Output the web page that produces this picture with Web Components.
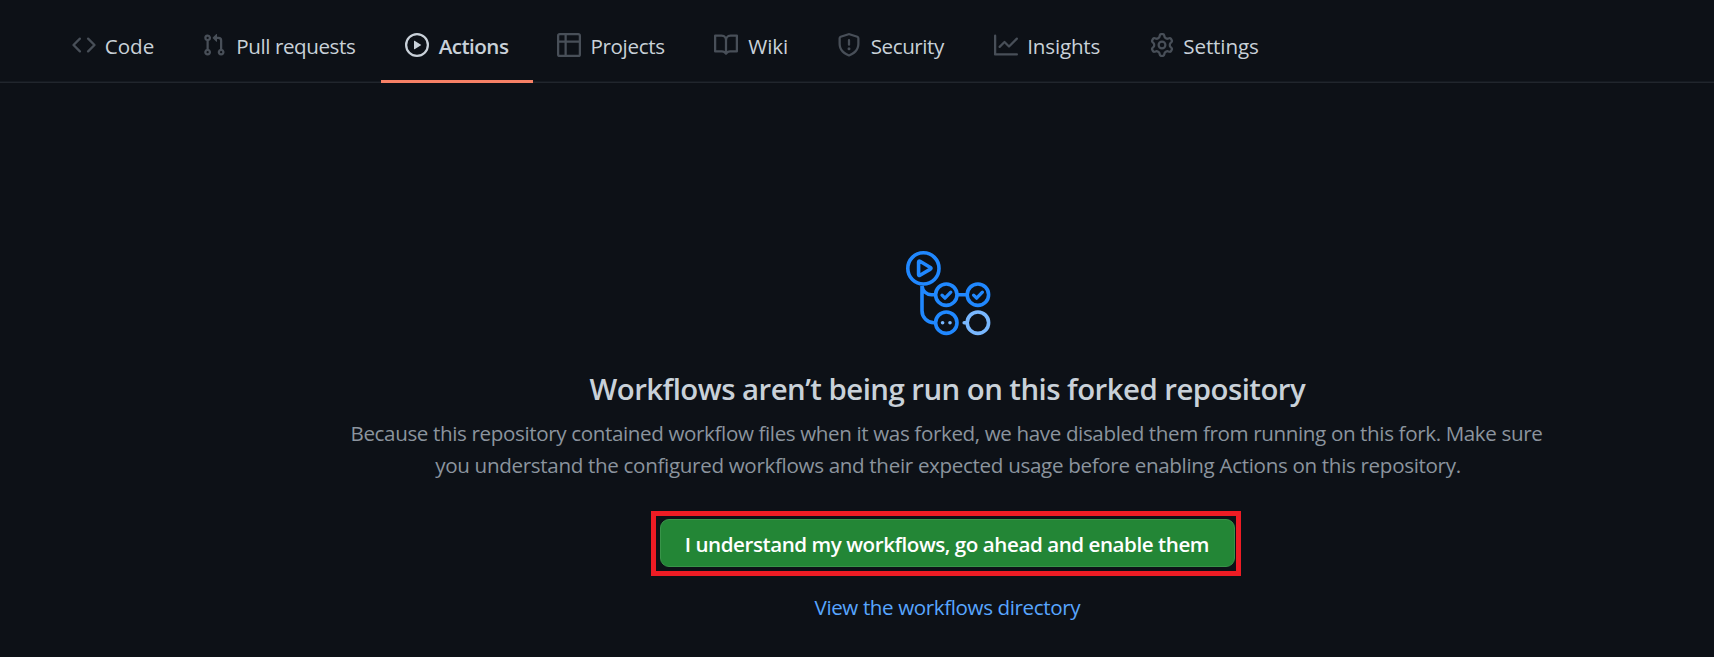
<!DOCTYPE html>
<html lang="en">
<head>
<meta charset="utf-8">
<title>Actions</title>
<style>
html,body{margin:0;height:100%;background:#0d1117;overflow:hidden}
body{font-family:"Open Sans","Noto Sans",sans-serif;color:#c9d1d9}
</style>
</head>
<body>
<repo-page>
  <repo-nav slot="nav">
    <nav-tab style="width:130px;--gap:9.7px" icon="code"><ink-line width="48">Code</ink-line></nav-tab>
    <nav-tab style="width:203px;--gap:12.3px" icon="pull"><ink-line width="116.7">Pull requests</ink-line></nav-tab>
    <nav-tab style="width:152px;--gap:9.7px" icon="play" selected><ink-line width="70.3" weight="600">Actions</ink-line></nav-tab>
    <nav-tab style="width:157px;--gap:11.5px" icon="table"><ink-line width="71.7">Projects</ink-line></nav-tab>
    <nav-tab style="width:123px;--gap:10.3px" icon="book"><ink-line width="38.7">Wiki</ink-line></nav-tab>
    <nav-tab style="width:157px;--gap:10.7px" icon="shield"><ink-line width="73.4">Security</ink-line></nav-tab>
    <nav-tab style="width:156px;--gap:11.3px" icon="graph"><ink-line width="70.3">Insights</ink-line></nav-tab>
    <nav-tab style="width:157px;--gap:10.3px" icon="gear"><ink-line width="73.7">Settings</ink-line></nav-tab>
  </repo-nav>
  <blank-slate>
    <flow-art slot="art"></flow-art>
    <ink-line slot="title" width="717" size="29.4" weight="600">Workflows aren’t being run on this forked repository</ink-line>
    <ink-line slot="text" width="1191">Because this repository contained workflow files when it was forked, we have disabled them from running on this fork. Make sure</ink-line>
    <ink-line slot="text" width="1025.5">you understand the configured workflows and their expected usage before enabling Actions on this repository.</ink-line>
    <green-button slot="action"><ink-line width="523.6" weight="600">I understand my workflows, go ahead and enable them</ink-line></green-button>
    <text-link slot="link"><ink-line width="267">View the workflows directory</ink-line></text-link>
  </blank-slate>
</repo-page>
<script>
const FAMILY = '"Open Sans","Noto Sans",sans-serif';
const pen = document.createElement('canvas').getContext('2d');
const define = (name, html, setup) => customElements.define(name, class extends HTMLElement {
  connectedCallback() {
    if (this.shadowRoot) return;
    this.attachShadow({mode: 'open'}).innerHTML = html;
    if (setup) setup(this, this.shadowRoot);
  }
});

const ICONS = {
  code: 'M4.72 3.22a.75.75 0 011.06 1.06L2.06 8l3.72 3.72a.75.75 0 11-1.06 1.06L.47 8.53a.75.75 0 010-1.06l4.25-4.25zm6.56 0a.75.75 0 10-1.06 1.06L13.94 8l-3.72 3.72a.75.75 0 101.06 1.06l4.25-4.25a.75.75 0 000-1.06l-4.25-4.25z',
  pull: 'M7.177 3.073L9.573.677A.25.25 0 0110 .854v4.792a.25.25 0 01-.427.177L7.177 3.427a.25.25 0 010-.354zM3.75 2.5a.75.75 0 100 1.5.75.75 0 000-1.5zm-2.25.75a2.25 2.25 0 113 2.122v5.256a2.251 2.251 0 11-1.5 0V5.372A2.25 2.25 0 011.5 3.25zM11 2.5h-1V4h1a1 1 0 011 1v5.628a2.251 2.251 0 101.5 0V5A2.5 2.5 0 0011 2.5zm1 10.25a.75.75 0 111.5 0 .75.75 0 01-1.5 0zM3.75 12a.75.75 0 100 1.5.75.75 0 000-1.5z',
  play: 'M1.5 8a6.5 6.5 0 1113 0 6.5 6.5 0 01-13 0zM8 0a8 8 0 100 16A8 8 0 008 0zM6.379 5.227A.25.25 0 006 5.442v5.117a.25.25 0 00.379.214l4.264-2.559a.25.25 0 000-.428L6.379 5.227z',
  table: 'M0 1.75C0 .784.784 0 1.75 0h12.5C15.216 0 16 .784 16 1.75v12.5A1.75 1.75 0 0114.25 16H1.75A1.75 1.75 0 010 14.25V1.75zM1.5 6.5v7.75c0 .138.112.25.25.25H5v-8H1.5zM5 5H1.5V1.75a.25.25 0 01.25-.25H5V5zm1.5 1.5v8h7.75a.25.25 0 00.25-.25V6.5h-8zm8-1.5h-8V1.5h7.75a.25.25 0 01.25.25V5z',
  book: 'M0 1.75A.75.75 0 01.75 1h4.253c1.227 0 2.317.59 3 1.501A3.744 3.744 0 0111.006 1h4.245a.75.75 0 01.75.75v10.5a.75.75 0 01-.75.75h-4.507a2.25 2.25 0 00-1.591.659l-.622.621a.75.75 0 01-1.06 0l-.622-.621A2.25 2.25 0 005.258 13H.75a.75.75 0 01-.75-.75V1.75zm8.755 3a2.25 2.25 0 012.25-2.25H14.5v9h-3.757c-.71 0-1.4.201-1.992.572l.004-7.322zm-1.504 7.324l.004-5.073-.002-2.253A2.25 2.25 0 005.003 2.5H1.5v9h3.757a3.75 3.75 0 011.994.574z',
  shield: 'M7.467.133a1.75 1.75 0 011.066 0l5.25 1.68A1.75 1.75 0 0115 3.48V7c0 1.566-.32 3.182-1.303 4.682-.983 1.498-2.585 2.813-5.032 3.855a1.7 1.7 0 01-1.33 0c-2.447-1.042-4.049-2.357-5.032-3.855C1.32 10.182 1 8.566 1 7V3.48a1.75 1.75 0 011.217-1.667l5.25-1.68zm.61 1.429a.25.25 0 00-.153 0l-5.25 1.68a.25.25 0 00-.174.238V7c0 1.358.275 2.666 1.057 3.86.784 1.194 2.121 2.34 4.366 3.297a.2.2 0 00.154 0c2.245-.956 3.582-2.104 4.366-3.298C13.225 9.666 13.5 8.36 13.5 7V3.48a.25.25 0 00-.174-.237l-5.25-1.68zM9 10.5a1 1 0 11-2 0 1 1 0 012 0zm-.25-5.75a.75.75 0 10-1.5 0v3a.75.75 0 001.5 0v-3z',
  graph: 'M1.5 1.75a.75.75 0 00-1.5 0v12.5c0 .414.336.75.75.75h14.5a.75.75 0 000-1.5H1.5V1.75zm14.28 2.53a.75.75 0 00-1.06-1.06L10 7.94 7.53 5.47a.75.75 0 00-1.06 0L3.22 8.72a.75.75 0 001.06 1.06L7 7.06l2.47 2.47a.75.75 0 001.06 0l5.25-5.25z',
  gear: 'M7.429 1.525a6.593 6.593 0 011.142 0c.036.003.108.036.137.146l.289 1.105c.147.56.55.967.997 1.189.174.086.341.183.501.29.417.278.97.423 1.53.27l1.102-.303c.11-.03.175.016.195.046.219.31.41.641.573.989.014.031.022.11-.059.19l-.815.806c-.411.406-.562.957-.53 1.456a4.588 4.588 0 010 .582c-.032.499.119 1.05.53 1.456l.815.806c.08.08.073.159.059.19a6.494 6.494 0 01-.573.99c-.02.029-.086.074-.195.045l-1.103-.303c-.559-.153-1.112-.008-1.529.27-.16.107-.327.204-.5.29-.449.222-.851.628-.998 1.189l-.289 1.105c-.029.11-.101.143-.137.146a6.613 6.613 0 01-1.142 0c-.036-.003-.108-.037-.137-.146l-.289-1.105c-.147-.56-.55-.967-.997-1.189a4.502 4.502 0 01-.501-.29c-.417-.278-.97-.423-1.53-.27l-1.102.303c-.11.03-.175-.016-.195-.046a6.492 6.492 0 01-.573-.989c-.014-.031-.022-.11.059-.19l.815-.806c.411-.406.562-.957.53-1.456a4.587 4.587 0 010-.582c.032-.499-.119-1.05-.53-1.456l-.815-.806c-.08-.08-.073-.159-.059-.19a6.44 6.44 0 01.573-.99c.02-.029.086-.075.195-.045l1.103.303c.559.153 1.112.008 1.529-.27.16-.107.327-.204.5-.29.449-.222.851-.628.998-1.189l.289-1.105c.029-.11.101-.143.137-.146zM8 0c-.236 0-.47.01-.701.03-.743.065-1.29.615-1.458 1.261l-.29 1.106c-.017.066-.078.158-.211.224a5.994 5.994 0 00-.668.386c-.123.082-.233.09-.3.071L3.27 2.776c-.644-.177-1.392.02-1.82.63a7.977 7.977 0 00-.704 1.217c-.315.675-.111 1.422.363 1.891l.815.806c.05.048.098.147.088.294a6.084 6.084 0 000 .772c.01.147-.038.246-.088.294l-.815.806c-.474.469-.678 1.216-.363 1.891.2.428.436.835.704 1.218.428.609 1.176.806 1.82.63l1.103-.303c.066-.019.176-.011.299.071.213.143.436.272.668.386.133.066.194.158.212.224l.289 1.106c.169.646.715 1.196 1.458 1.26a8.094 8.094 0 001.402 0c.743-.064 1.29-.614 1.458-1.26l.29-1.106c.017-.066.078-.158.211-.224a5.98 5.98 0 00.668-.386c.123-.082.233-.09.3-.071l1.102.302c.644.177 1.392-.02 1.82-.63.268-.382.505-.789.704-1.217.315-.675.111-1.422-.364-1.891l-.814-.806c-.05-.048-.098-.147-.088-.294a6.1 6.1 0 000-.772c-.01-.147.039-.246.088-.294l.814-.806c.475-.469.679-1.216.364-1.891a7.992 7.992 0 00-.704-1.218c-.428-.609-1.176-.806-1.82-.63l-1.103.303c-.066.019-.176.011-.299-.071a5.991 5.991 0 00-.668-.386c-.133-.066-.194-.158-.212-.224L10.16 1.29C9.99.645 9.444.095 8.701.031A8.094 8.094 0 008 0zm1.5 8a1.5 1.5 0 11-3 0 1.5 1.5 0 013 0zM11 8a3 3 0 11-6 0 3 3 0 016 0z'
};

/* A single line of text, tracked so that its ink fills the given width. */
define('ink-line', `<style>
:host{display:block;white-space:nowrap;flex:none}
span{display:block;width:max-content;font-variant-ligatures:none}
</style><span><slot></slot></span>`, (el, root) => {
  const size = +(el.getAttribute('size') || 20.6), weight = el.getAttribute('weight') || 400;
  const width = +el.getAttribute('width'), text = el.textContent;
  pen.font = `${weight} ${size}px ${FAMILY}`;
  pen.letterSpacing = '0.01px';
  const m = pen.measureText(text);
  const ink = m.actualBoundingBoxLeft + m.actualBoundingBoxRight;
  const span = root.querySelector('span');
  el.style.width = width + 'px';
  span.style.cssText = `font-size:${size}px;font-weight:${weight};letter-spacing:${((width - ink) / (text.length - 1)).toFixed(3)}px;margin-left:${m.actualBoundingBoxLeft.toFixed(2)}px`;
});

define('repo-page', `<style>
:host{display:flex;flex-direction:column;height:657px;background:#0d1117}
</style><slot name="nav"></slot><slot></slot>`);

define('repo-nav', `<style>
:host{display:flex;box-sizing:border-box;height:83px;padding-left:48px;box-shadow:inset 0 -1px #21262d,inset 0 -2px #151a21}
</style><slot></slot>`);

define('nav-tab', `<style>
:host{display:flex;align-items:center;box-sizing:border-box;height:83px;padding:9px 0 0 24px;line-height:28px;flex:none;color:#c9d1d9}
:host([selected]){border-bottom:3px solid #f78166;padding-top:12px}
svg{width:24px;height:24px;margin:-2px var(--gap) 0 0;fill:#484f58;flex:none}
:host([selected]) svg{fill:#c9d1d9}
</style><svg viewBox="0 0 16 16"><path fill-rule="evenodd"/></svg><slot></slot>`, (el, root) => {
  root.querySelector('path').setAttribute('d', ICONS[el.getAttribute('icon')]);
});

define('blank-slate', `<style>
:host{display:flex;flex-direction:column;align-items:center;width:1200px;margin-left:348px;padding-top:164px}
.title{line-height:40px;margin-top:26px;color:#c9d1d9}
.text{display:flex;flex-direction:column;align-items:center;line-height:32px;margin-top:8px;color:#8b949e}
.action{margin:30px 4px 0 0}
.link{margin-top:15px;line-height:32px}
</style>
<slot name="art"></slot>
<div class="title"><slot name="title"></slot></div>
<div class="text"><slot name="text"></slot></div>
<div class="action"><slot name="action"></slot></div>
<div class="link"><slot name="link"></slot></div>`);

define('flow-art', `<style>
:host{display:block;width:96px;height:96px}
svg{display:block}
</style>
<svg width="96" height="96" viewBox="900 247 96 96" fill="none" stroke="#2088ff" stroke-width="3.6" stroke-linecap="round" stroke-linejoin="round">
<circle cx="923.4" cy="268.4" r="15.6"/>
<path d="M918.6 262.300v12.200q0 1.600 1.400.8l10.400-6.200q1.200-.8 0-1.600l-10.400-6.200q-1.400-.7-1.400 1z"/>
<path d="M922 286v24.700a12 12 0 0012 12M922 286a9.500 9.500 0 009.500 8.700h3M958 294.700h8" stroke-linecap="butt"/>
<circle cx="946.300" cy="294.700" r="10.700"/><circle cx="977.900" cy="294.700" r="10.700"/><circle cx="946.300" cy="322.700" r="10.700"/>
<path d="M942 295.200l3 3 5.800-6M973.600 295.200l3 3 5.800-6" stroke-width="3.300"/>
<g fill="#79b8ff" stroke="none"><circle cx="942.600" cy="322.700" r="1.800"/><circle cx="950" cy="322.700" r="1.800"/></g>
<g stroke="#79b8ff"><circle cx="977.900" cy="322.700" r="10.700"/><path d="M964.200 322.700h2"/></g>
</svg>`);

define('green-button', `<style>
:host{display:block;border:5px solid #ed1c24;padding:3px 5px 4px 4px;box-sizing:border-box;width:590px;height:65px}
button{display:flex;align-items:center;justify-content:center;width:575px;height:48px;box-sizing:border-box;padding:2px 0 0;margin:0;border:1px solid #389449;border-radius:9px;background:#238636;color:#fff;font:inherit;line-height:32px}
</style><button><slot></slot></button>`);

define('text-link', `<style>
:host{display:block;color:#58a6ff}
a{display:block}
</style><a><slot></slot></a>`);
</script>
</body>
</html>
